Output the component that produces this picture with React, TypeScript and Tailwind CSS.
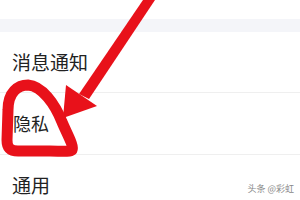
import React from "react";

export default function App() {
  const font = { fontFamily: '"Noto Sans CJK SC", "Noto Sans", sans-serif' };
  return (
    <div className="relative w-[300px] h-[200px] overflow-hidden bg-white" style={font}>
      <div className="h-[19px] bg-white" />
      <div className="h-[13px] bg-[#f4f5f9]" />
      <div className="h-[61px] flex items-center pl-[12px] border-b border-[#efefef] text-[19px] text-[#222]">消息通知</div>
      <div className="h-[62px] flex items-center pl-[13px] border-b border-[#efefef] text-[18px] text-[#222]">隐私</div>
      <div className="h-[61px] flex items-center pl-[12px] text-[19px] text-[#222]">通用</div>
      <div className="absolute right-[6px] bottom-[7px] text-[9px] leading-none text-[#888]">头条 @彩虹</div>
      <svg className="absolute left-0 top-0" width="300" height="200" viewBox="0 0 300 200">
        <polygon points="143,0 155,0 89,99 79,94" fill="#e8111a" />
        <polygon points="66,85 97,106 63,118" fill="#e8111a" />
        <path
          d="M8 110 C 8 92, 18 85, 28 85 C 42 86, 55 104, 62 122 C 68 136, 74 146, 72 150 C 70 152, 60 151, 50 151 L 18 151 C 10 151, 7 148, 7 140 Z"
          fill="none"
          stroke="#e8111a"
          strokeWidth="11"
          strokeLinejoin="round"
        />
      </svg>
    </div>
  );
}
